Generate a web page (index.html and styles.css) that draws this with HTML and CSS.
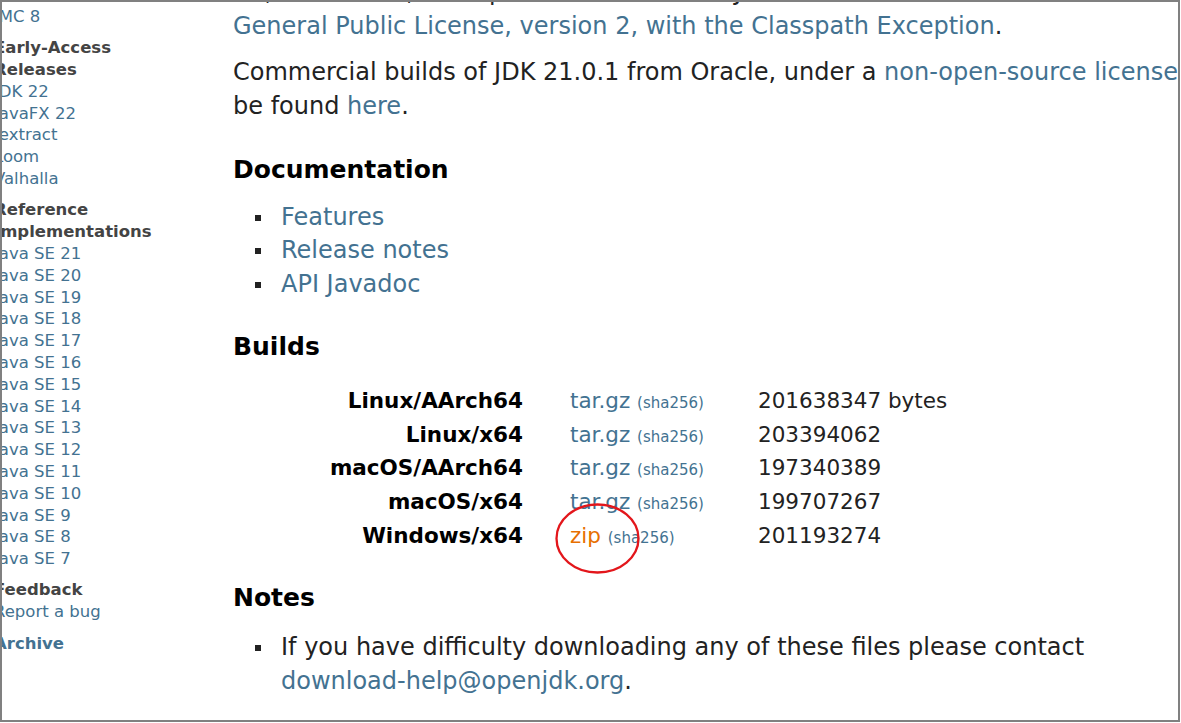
FILE: index.html
```html
<!DOCTYPE html>
<html lang="en">
<head>
    <meta charset="UTF-8">
    <title>JDK 21.0.1 GA Release</title>
    <link rel="stylesheet" href="styles.css">
</head>
<body>
    <div class="frame">
        <div id="sidebar">
            <div class="links">
                <div class="link"><a href="#">JMC 8</a></div>
            </div>
            <div class="links">
                <div class="links-head">Early-Access</div>
                <div class="links-head">Releases</div>
                <div class="link"><a href="#">JDK 22</a></div>
                <div class="link"><a href="#">JavaFX 22</a></div>
                <div class="link"><a href="#">Jextract</a></div>
                <div class="link"><a href="#">Loom</a></div>
                <div class="link"><a href="#">Valhalla</a></div>
            </div>
            <div class="links">
                <div class="links-head">Reference</div>
                <div class="links-head">Implementations</div>
                <div class="link"><a href="#">Java SE 21</a></div>
                <div class="link"><a href="#">Java SE 20</a></div>
                <div class="link"><a href="#">Java SE 19</a></div>
                <div class="link"><a href="#">Java SE 18</a></div>
                <div class="link"><a href="#">Java SE 17</a></div>
                <div class="link"><a href="#">Java SE 16</a></div>
                <div class="link"><a href="#">Java SE 15</a></div>
                <div class="link"><a href="#">Java SE 14</a></div>
                <div class="link"><a href="#">Java SE 13</a></div>
                <div class="link"><a href="#">Java SE 12</a></div>
                <div class="link"><a href="#">Java SE 11</a></div>
                <div class="link"><a href="#">Java SE 10</a></div>
                <div class="link"><a href="#">Java SE 9</a></div>
                <div class="link"><a href="#">Java SE 8</a></div>
                <div class="link"><a href="#">Java SE 7</a></div>
            </div>
            <div class="links">
                <div class="links-head">Feedback</div>
                <div class="link"><a href="#">Report a bug</a></div>
            </div>
            <div class="links">
                <div class="links-head"><a href="#">Archive</a></div>
            </div>
        </div>

        <div id="main">
            <p>Kit, version 21, an implementation of the Java SE 21 Platform under the GNU<br>
            <a href="#">General Public License, version 2, with the Classpath Exception</a>.</p>

            <p>Commercial builds of JDK 21.0.1 from Oracle, under a <a href="#">non-open-source license</a>, can<br>
            be found <a href="#">here</a>.</p>

            <h2>Documentation</h2>
            <ul>
                <li><a href="#">Features</a></li>
                <li><a href="#">Release notes</a></li>
                <li><a href="#">API Javadoc</a></li>
            </ul>

            <h2>Builds</h2>
            <table class="builds">
                <tr>
                    <th>Linux/AArch64</th>
                    <td class="file"><a href="#">tar.gz</a> <a class="sha" href="#">(sha256)</a></td>
                    <td>201638347 bytes</td>
                </tr>
                <tr>
                    <th>Linux/x64</th>
                    <td class="file"><a href="#">tar.gz</a> <a class="sha" href="#">(sha256)</a></td>
                    <td>203394062</td>
                </tr>
                <tr>
                    <th>macOS/AArch64</th>
                    <td class="file"><a href="#">tar.gz</a> <a class="sha" href="#">(sha256)</a></td>
                    <td>197340389</td>
                </tr>
                <tr>
                    <th>macOS/x64</th>
                    <td class="file"><a href="#">tar.gz</a> <a class="sha" href="#">(sha256)</a></td>
                    <td>199707267</td>
                </tr>
                <tr>
                    <th>Windows/x64</th>
                    <td class="file"><a class="hover" href="#">zip</a> <a class="sha" href="#">(sha256)</a></td>
                    <td>201193274</td>
                </tr>
            </table>

            <h2>Notes</h2>
            <ul class="notes">
                <li>If you have difficulty downloading any of these files please contact<br>
                <a href="#">download-help@openjdk.org</a>.</li>
            </ul>
        </div>

        <!-- red marker drawn over the zip link -->
        <svg class="mark" width="87" height="73" viewBox="0 0 87 73">
            <ellipse cx="43.5" cy="36.5" rx="41" ry="34" fill="none" stroke="#e3161b" stroke-width="2.3"/>
        </svg>
    </div>
</body>
</html>
```

FILE: styles.css
```css
body {
    margin: 0;
    background: #fff;
    font-family: "DejaVu Sans", sans-serif;
    color: #222;
}
a {
    color: #437291;
    text-decoration: none;
}
.frame {
    position: relative;
    width: 1176px;
    height: 718px;
    border: 2px solid #808080;
    overflow: hidden;
    display: flex;
    align-items: flex-start;
}
#sidebar {
    flex: none;
    width: 200px;
    margin-left: -8px;
    padding-top: 4px;
    font-size: 16.5px;
    line-height: 21.8px;
}
#sidebar .links + .links {
    margin-top: 9.5px;
}
.links-head {
    font-weight: bold;
    color: #444;
    white-space: nowrap;
}
.links-head a {
    color: #437291;
}
.link {
    white-space: nowrap;
}
#main {
    flex: none;
    margin-left: 39px;
    margin-top: -25.8px;
    font-size: 24px;
    line-height: 33.6px;
    white-space: nowrap;
}
#main p {
    margin: 0 0 13px;
}
#main h2 {
    margin: 30px 0 15px;
    font-size: 25px;
    line-height: 32px;
    color: #000;
}
#main ul {
    margin: 0;
    padding-left: 48px;
    list-style: none;
}
#main ul li::before {
    content: "";
    display: inline-block;
    width: 6px;
    height: 6px;
    margin-left: -26px;
    margin-right: 20px;
    background: #222;
    vertical-align: 4px;
}
#main ul.notes {
    padding-top: 2px;
}
table.builds {
    margin-top: 20.5px;
    border-collapse: collapse;
    font-size: 21.5px;
    line-height: 33.7px;
}
table.builds th {
    width: 290px;
    padding: 0;
    text-align: right;
    color: #000;
}
table.builds td {
    padding: 0;
}
table.builds td.file {
    width: 188px;
    padding-left: 47px;
}
.sha {
    font-size: 15px;
    line-height: 1;
}
a.hover {
    color: #e76f00;
}
.mark {
    position: absolute;
    left: 552px;
    top: 500px;
}
```
